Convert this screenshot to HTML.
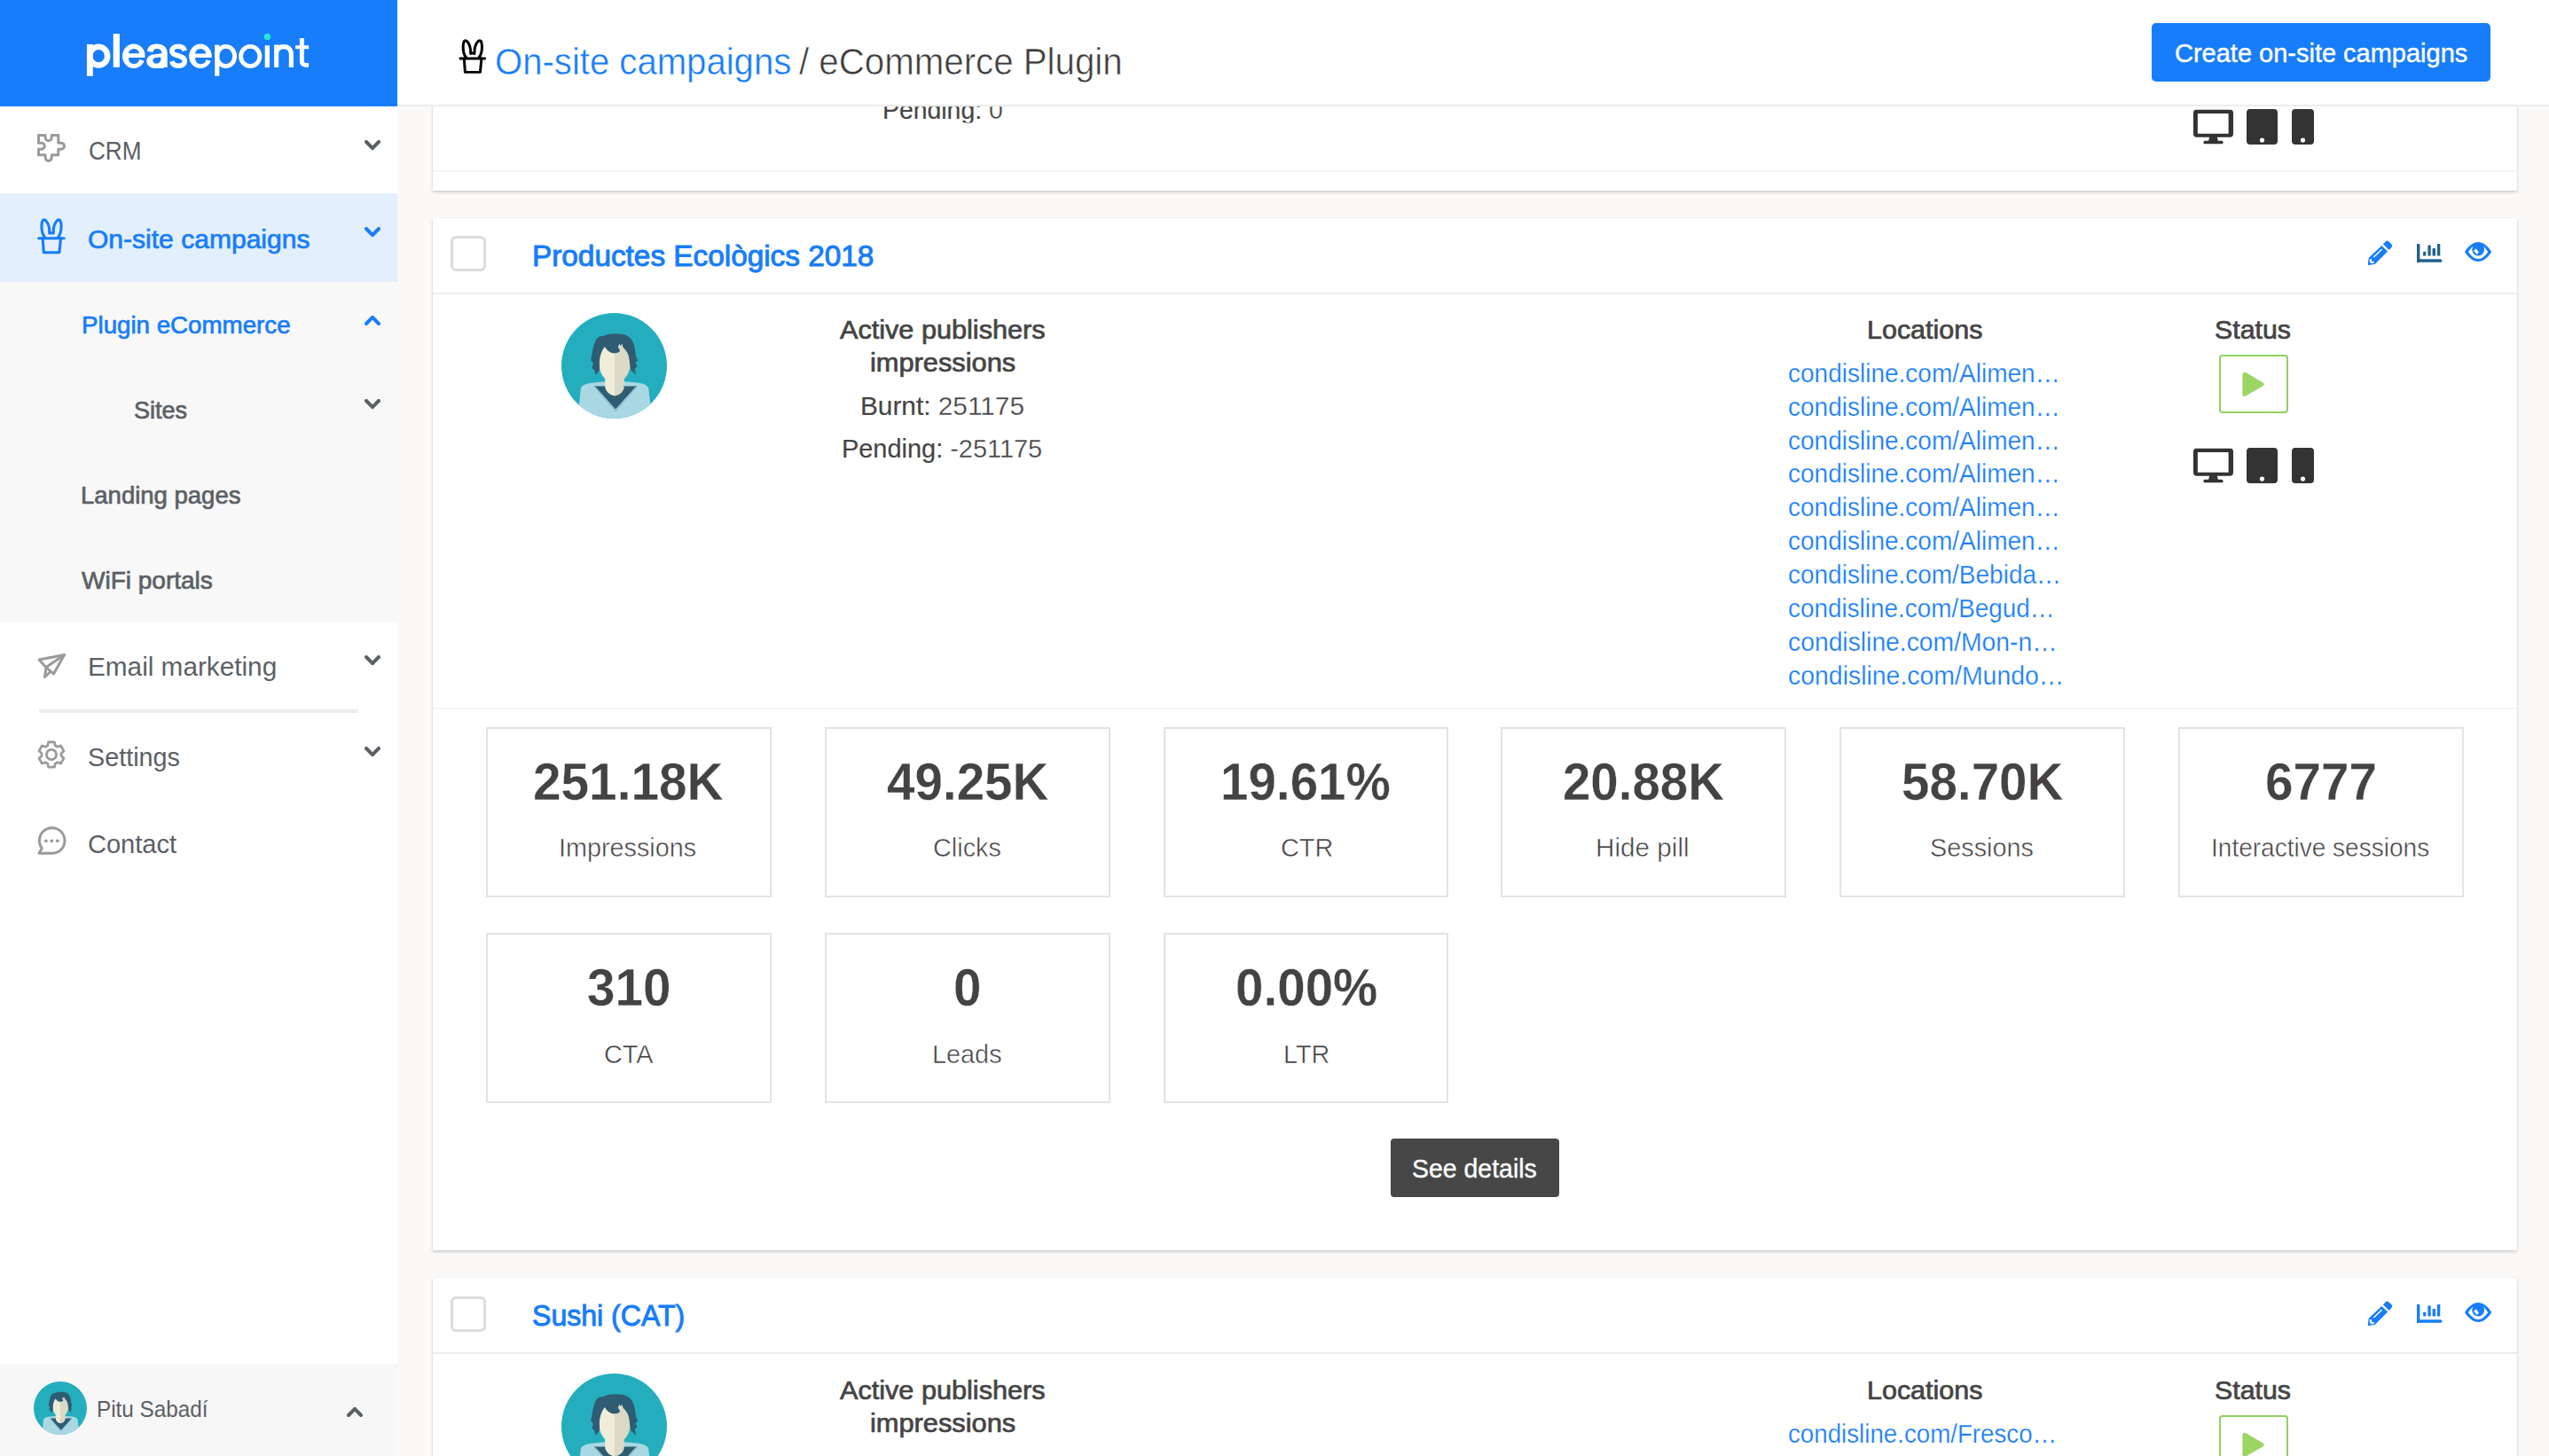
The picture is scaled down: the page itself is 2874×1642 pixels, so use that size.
<!DOCTYPE html>
<html><head><meta charset="utf-8">
<style>
*{box-sizing:border-box;margin:0;padding:0}
html,body{width:2874px;height:1642px;overflow:hidden;background:#faf9f7;font-family:"Liberation Sans",sans-serif;color:#444}
.a{position:absolute}
.t{position:absolute;line-height:1;white-space:nowrap;transform-origin:0 0}
#side{position:absolute;left:0;top:0;width:448px;height:1642px;background:#fff;z-index:5}
#hdr{position:absolute;left:448px;top:0;width:2426px;height:120px;background:#fff;border-bottom:2px solid #ececec;z-index:4}
.card{position:absolute;left:488px;width:2350px;background:#fff;box-shadow:0 2px 3px rgba(0,0,0,.16),0 0 2px rgba(0,0,0,.07)}
.sep{position:absolute;left:488px;width:2350px;height:2px;background:#ededed}
.box{position:absolute;width:322px;height:192px;border:2px solid #e3e3e3;background:#fff}
.chk{position:absolute;left:508px;width:40px;height:40px;border:3px solid #dcdcdc;border-radius:6px;background:#fff}
.play{position:absolute;left:2502px;width:78px;height:66px;border:2px solid #8fd160;border-radius:4px;background:#fff}
svg{position:absolute;overflow:visible}
#cnt{position:absolute;left:0;top:0;width:2874px;height:1642px;z-index:1}
#ov{position:absolute;left:0;top:0;width:2874px;height:1642px;z-index:6;pointer-events:none}
</style></head>
<body>
<svg width="0" height="0" style="position:absolute">
<defs>
<symbol id="avatar" viewBox="0 0 1456 1456">
  <clipPath id="avc"><circle cx="723" cy="721" r="639"/></clipPath>
  <circle cx="723" cy="721" r="639" fill="#24aebd"/>
  <g clip-path="url(#avc)">
    <path d="M290 1456 L300 1190 L318 1000 C326 958 380 935 470 925 L728 902 L1000 925 C1090 935 1132 960 1140 1000 L1162 1190 L1170 1456 Z" fill="#a9d8e4"/>
    <path d="M478 968 L1003 968 L740 1275 Z" fill="#2e5c73"/><path d="M478 968 L740 1275 L752 1262 L500 980 Z" fill="#9fd0de"/><path d="M1003 968 L740 1275 L728 1262 L980 980 Z" fill="#9fd0de"/>
    <path d="M612 840 L614 990 C640 1062 700 1085 736 1085 L736 840 Z" fill="#efecda"/>
    <path d="M728 840 L728 1085 C790 1080 830 1040 842 990 L845 840 Z" fill="#dcd9c6"/>
    <path d="M736 430 C610 430 540 540 540 700 C540 830 640 935 736 940 Z" fill="#efecda"/>
    <path d="M728 430 L728 940 C820 935 918 830 918 700 C918 540 850 430 728 430 Z" fill="#dcd9c6"/>
    <path d="M440 655 C462 560 468 470 505 405 C528 368 560 360 590 362 C640 330 740 322 830 340 C915 360 958 420 972 500 C980 560 982 610 1012 660 L982 676 L1002 735 L972 752 L988 830 L928 778 L912 700 C910 630 895 570 862 530 L832 498 L818 458 L795 480 L788 452 L770 492 L795 540 C770 568 720 578 682 560 C650 546 625 520 610 490 C575 530 548 600 545 680 L548 770 L502 832 L482 772 L455 745 L470 690 Z" fill="#2e5c73"/>
  </g>
</symbol>
<symbol id="cactus" viewBox="0 0 32 41">
  <g fill="none" stroke="currentColor" stroke-width="3.1" stroke-linecap="round" stroke-linejoin="round">
    <path d="M1.6 22.7 H30.2"/>
    <path d="M6.15 22.7 L7.3 38.7 H24.9 L26.5 22.7"/>
    <path d="M8.6 21.7 C5.6 18 4.8 12.5 5 8 C5.2 4 6.2 1.9 7.6 1.9 C9.6 1.9 12.8 5.5 13.6 12 L13.8 17.1 Q16 15.9 18.2 17.1 L18.4 12 C19.2 5.5 22.4 1.9 24.4 1.9 C25.8 1.9 26.8 4 27 8 C27.2 12.5 26.4 18 23.4 21.7"/>
  </g>
</symbol>
<symbol id="desk" viewBox="0 0 46 40">
  <path fill="#333" d="M4 0 H42 A4 4 0 0 1 46 4 V28 A4 4 0 0 1 42 32 H27.5 L28.5 36.2 H33 A2 2 0 0 1 33 40 H13 A2 2 0 0 1 13 36.2 H17.5 L18.5 32 H4 A4 4 0 0 1 0 28 V4 A4 4 0 0 1 4 0 Z M5 4.6 V28 H40.5 V4.6 Z" fill-rule="evenodd"/>
</symbol>
<symbol id="tab" viewBox="0 0 35 40">
  <path fill="#333" fill-rule="evenodd" d="M4 0 H31 A4 4 0 0 1 35 4 V36 A4 4 0 0 1 31 40 H4 A4 4 0 0 1 0 36 V4 A4 4 0 0 1 4 0 Z M17.5 32.5 A2.6 2.6 0 1 0 17.5 37.7 A2.6 2.6 0 1 0 17.5 32.5 Z"/>
</symbol>
<symbol id="phone" viewBox="0 0 25 40">
  <path fill="#333" fill-rule="evenodd" d="M4 0 H21 A4 4 0 0 1 25 4 V36 A4 4 0 0 1 21 40 H4 A4 4 0 0 1 0 36 V4 A4 4 0 0 1 4 0 Z M12.5 32.5 A2.6 2.6 0 1 0 12.5 37.7 A2.6 2.6 0 1 0 12.5 32.5 Z"/>
</symbol>
<symbol id="pencil" viewBox="0 0 1533 1456">
  <path fill="currentColor" d="M880 355 L1000 240 Q1050 195 1110 225 L1250 360 Q1300 420 1250 490 L1140 610 Z"/>
  <path fill="currentColor" fill-rule="evenodd" d="M820 420 L1075 670 L545 1205 Q520 1225 480 1230 L270 1268 Q215 1275 222 1215 L255 965 Q262 945 280 930 Z M300 1000 L385 1000 L390 1100 L490 1110 L490 1180 L350 1185 L300 1130 Z M450 900 L490 935 L850 595 L815 555 Z"/>
</symbol>
<symbol id="chart" viewBox="0 0 30 22">
  <g fill="currentColor">
    <rect x="0" y="0" width="3.4" height="21" rx="0.6"/>
    <rect x="0" y="17.2" width="28.4" height="3.6" rx="1.6"/>
    <rect x="7.1" y="8.7" width="3.2" height="4.9" rx="0.6"/>
    <rect x="12.4" y="1.6" width="3.3" height="12" rx="0.6"/>
    <rect x="17.6" y="5.1" width="3.4" height="8.5" rx="0.6"/>
    <rect x="23" y="0" width="3.3" height="13.6" rx="0.6"/>
  </g>
</symbol>
<symbol id="eye" viewBox="0 0 31 22">
  <path fill="currentColor" fill-rule="evenodd" d="M0 11 C5 3.5 10 0 15.2 0 C20.4 0 25.4 3.5 30.2 11 C25.4 18.5 20.4 22 15.2 22 C10 22 5 18.5 0 11 Z M4 11 C7.2 15.5 10.9 19 15.2 19 C19.5 19 23 15.5 26.2 11 C24.6 8.8 23 6.6 21.4 4.9 L8.8 4.9 C7.2 6.6 5.6 8.8 4 11 Z"/>
  <circle cx="15.2" cy="8.6" r="6.9" fill="currentColor"/>
  <path fill="#fff" d="M10.1 9.7 L12.8 7.3 L15.9 11.5 L13.7 13.9 Z"/>
</symbol>
<symbol id="chev" viewBox="0 0 18 12">
  <path d="M2 2 L9 9.2 L16 2" fill="none" stroke="currentColor" stroke-width="4" stroke-linecap="round" stroke-linejoin="round"/>
</symbol>
</defs>
</svg>

<div id="cnt">
  <!-- card 1 (partial) -->
  <div class="card" style="top:-900px;height:1114.5px"></div>
  <div class="sep" style="top:192px;height:1.5px;background:#f6f6f6"></div>
  <svg style="left:2473px;top:123px" width="45" height="40" viewBox="0 0 46 40"><use href="#desk"/></svg>
  <svg style="left:2533px;top:123px" width="35" height="40" viewBox="0 0 35 40"><use href="#tab"/></svg>
  <svg style="left:2583.5px;top:123px" width="25" height="40" viewBox="0 0 25 40"><use href="#phone"/></svg>

  <!-- card 2 -->
  <div class="card" style="top:246px;height:1164px"></div>
  <div class="chk" style="top:266px"></div>
  <div class="sep" style="top:330px"></div>
  <svg style="left:2664px;top:266px;color:#177dfa" width="40" height="38" viewBox="0 0 1533 1456"><use href="#pencil"/></svg>
  <svg style="left:2724.7px;top:275px;color:#22618c" width="30" height="22" viewBox="0 0 30 22"><use href="#chart"/></svg>
  <svg style="left:2778.8px;top:273px;color:#177dfa" width="31" height="22" viewBox="0 0 31 22"><use href="#eye"/></svg>
  <svg style="left:632.5px;top:352.5px" width="119" height="119" viewBox="85 82 1277 1278"><use href="#avatar" width="1456" height="1456"/></svg>
  <div class="play" style="top:400px"></div>
  <svg style="left:2527.8px;top:419px" width="26" height="29" viewBox="0 0 26 29"><path d="M4.2 1.2 L23.6 12.4 Q25.6 14.2 23.6 16.2 L4.2 27.6 Q0.6 29.2 0.4 25.4 V3.6 Q0.6 -0.2 4.2 1.2 Z" fill="#9bd663"/></svg>
  <svg style="left:2473px;top:505px" width="45" height="40" viewBox="0 0 46 40"><use href="#desk"/></svg>
  <svg style="left:2533px;top:505px" width="35" height="40" viewBox="0 0 35 40"><use href="#tab"/></svg>
  <svg style="left:2583.5px;top:505px" width="25" height="40" viewBox="0 0 25 40"><use href="#phone"/></svg>
  <div class="sep" style="top:798px;height:1.5px;background:#f4f4f4"></div>
  <div class="box" style="left:548px;top:820px;width:321.5px"></div>
  <div class="box" style="left:930px;top:820px;width:322px"></div>
  <div class="box" style="left:1312px;top:820px;width:320.5px"></div>
  <div class="box" style="left:1692px;top:820px;width:321.5px"></div>
  <div class="box" style="left:2074.3px;top:820px;width:321.5px"></div>
  <div class="box" style="left:2456.3px;top:820px;width:321.5px"></div>
  <div class="box" style="left:548px;top:1052px;width:321.5px"></div>
  <div class="box" style="left:930px;top:1052px;width:322px"></div>
  <div class="box" style="left:1312px;top:1052px;width:320.5px"></div>
  <div class="a" style="left:1568px;top:1284px;width:190px;height:66px;background:#474747;border-radius:4px"></div>

  <!-- card 3 -->
  <div class="card" style="top:1441px;height:600px"></div>
  <div class="chk" style="top:1462px"></div>
  <div class="sep" style="top:1525px"></div>
  <svg style="left:2664px;top:1462px;color:#177dfa" width="40" height="38" viewBox="0 0 1533 1456"><use href="#pencil"/></svg>
  <svg style="left:2724.7px;top:1471px;color:#177dfa" width="30" height="22" viewBox="0 0 30 22"><use href="#chart"/></svg>
  <svg style="left:2778.8px;top:1469px;color:#177dfa" width="31" height="22" viewBox="0 0 31 22"><use href="#eye"/></svg>
  <svg style="left:632.5px;top:1548.5px" width="119" height="119" viewBox="85 82 1277 1278"><use href="#avatar" width="1456" height="1456"/></svg>
  <div class="play" style="top:1595.5px"></div>
  <svg style="left:2527.8px;top:1614.5px" width="26" height="29" viewBox="0 0 26 29"><path d="M4.2 1.2 L23.6 12.4 Q25.6 14.2 23.6 16.2 L4.2 27.6 Q0.6 29.2 0.4 25.4 V3.6 Q0.6 -0.2 4.2 1.2 Z" fill="#9bd663"/></svg>
</div>

<!-- HEADER -->
<div id="hdr"></div>
<!-- SIDEBAR -->
<div id="side">
  <div class="a" style="left:0;top:0;width:448px;height:120px;background:#177dfa"></div>
  <div class="a" style="left:0;top:218px;width:448px;height:100px;background:#e3effd"></div>
  <div class="a" style="left:0;top:318px;width:448px;height:384px;background:#f8f8f8"></div>
  <div class="a" style="left:44px;top:800px;width:360px;height:4px;background:#ededed"></div>
  <div class="a" style="left:0;top:1538px;width:448px;height:104px;background:#f7f7f7"></div>
</div>

<div id="ov">
  <!-- logo -->
  <svg style="left:0;top:0" width="448" height="120" viewBox="0 0 448 120">
  <g fill="none" stroke="#fff" stroke-linecap="butt">
    <path d="M101.35 49.9 V85.8" stroke-width="6.9"/>
    <ellipse cx="111.2" cy="63.15" rx="9.95" ry="10.45" stroke-width="6.6"/>
    <path d="M131.3 38.1 V75.9" stroke-width="7.2"/>
  </g>
  <g transform="translate(0 0)"><ellipse cx="150.8" cy="63.25" rx="12.8" ry="13.75" fill="#fff"/><path d="M145 60.3 A5.95 5.4 0 0 1 156.9 60.3 Z" fill="#177dfa"/><path d="M145 64.9 H164.5 V69.2 L157.3 67.1 A6.15 6.1 0 0 1 145 64.9 Z" fill="#177dfa"/></g>
  <path d="M165.8 57.8 C166.8 52 171 49.6 176.8 49.6 C184 49.6 188.7 53.5 188.7 60 V76 H182.5 V60.5 C182.5 57 180.5 55 176.8 55 C174.3 55 172.8 56.5 172.4 59.1 Z" fill="#fff"/>
  <path d="M184.5 60.1 L173.85 61.2 A8.65 7.85 0 0 0 173.85 76.9 H184.5 Z" fill="#fff"/>
  <path d="M181.3 64.6 L176 65 C173.4 65.2 172.3 66.5 172.3 68.3 C172.3 70.3 174 71.7 176.3 71.7 C179.6 71.7 181.3 69.6 181.3 67 Z" fill="#177dfa"/>
  <path d="M208.3 57.2 C207.4 53.6 204.8 52.3 201 52.3 C197.2 52.3 194 54.2 194 57.5 C194 60.9 197.2 61.9 201.5 63 C206 64.2 208.3 65.5 208.3 69 C208.3 72.3 205.2 74.2 201 74.2 C197 74.2 194.6 72.5 193.8 69.1" fill="none" stroke="#fff" stroke-width="5.6"/>
  <g transform="translate(75.15 0.1)"><ellipse cx="150.8" cy="63.25" rx="12.8" ry="13.75" fill="#fff"/><path d="M145 60.3 A5.95 5.4 0 0 1 156.9 60.3 Z" fill="#177dfa"/><path d="M145 64.9 H164.5 V69.2 L157.3 67.1 A6.15 6.1 0 0 1 145 64.9 Z" fill="#177dfa"/></g>
  <g fill="none" stroke="#fff" stroke-linecap="butt">
    <path d="M244.75 50.6 V85.7" stroke-width="5.1"/>
    <ellipse cx="254.7" cy="63.5" rx="9.95" ry="11.1" stroke-width="4.9"/>
    <ellipse cx="282.2" cy="63.5" rx="10.65" ry="11.1" stroke-width="4.9"/>
    <path d="M301.35 51.2 V76.1" stroke-width="5.3"/>
    <path d="M311.65 50.6 V76.1 M311.65 61 C311.65 55 315 52.6 320 52.6 C325 52.6 328.35 55.5 328.35 61.5 V76.1" stroke-width="5.1"/>
    <path d="M340.35 43 V68.5 C340.35 72.6 342.2 73.6 348.1 73.6" stroke-width="4.9"/>
    <path d="M333.1 53.2 H348.1" stroke-width="4"/>
  </g><circle cx="301.4" cy="41.4" r="3.7" fill="#25e8d6"/></svg>
  <!-- sidebar icons -->
  <svg style="left:40px;top:149px" width="36" height="36" viewBox="40 149 36 36"><path d="M43.5 152.5 H51.2 V155.3 A3.5 3.5 0 0 0 58.2 155.3 V152.5 H65.8 V161.2 H69 A3.5 3.5 0 0 1 69 168.2 H65.8 V174.7 H58.2 V177.9 A3.5 3.5 0 0 1 51.2 177.9 V174.7 H43.5 V168.2 H46.8 A3.5 3.5 0 0 0 46.8 161.2 H43.5 Z" fill="none" stroke="#9a9a9a" stroke-width="3" stroke-linejoin="round"/></svg>
  <svg style="left:42px;top:245.5px;color:#177dfa" width="32" height="41" viewBox="0 0 32 41"><use href="#cactus"/></svg>
  <svg style="left:40px;top:735px" width="36" height="32" viewBox="40 735 36 32"><g fill="none" stroke="#9a9a9a" stroke-width="3" stroke-linejoin="round" stroke-linecap="round"><path d="M44 744 L72.5 738.5 L60.5 760 L52 752.5 Z"/><path d="M52 752.5 L72.5 738.5"/><path d="M52 752.5 L50.5 763.5 L57 757.5"/></g></svg>
  <svg style="left:40px;top:833px" width="36" height="36" viewBox="-18 -18 36 36"><g transform="translate(0 0)" fill="none" stroke="#9a9a9a" stroke-width="2.7" stroke-linejoin="round"><path d="M-4.30 -10.13 L-3.41 -14.20 L3.41 -14.20 L4.30 -10.13 L6.62 -8.78 L10.59 -10.05 L14.00 -4.15 L10.92 -1.34 L10.92 1.34 L14.00 4.15 L10.59 10.05 L6.62 8.78 L4.30 10.13 L3.41 14.20 L-3.41 14.20 L-4.30 10.13 L-6.62 8.78 L-10.59 10.05 L-14.00 4.15 L-10.92 1.34 L-10.92 -1.34 L-14.00 -4.15 L-10.59 -10.05 L-6.62 -8.78 Z"/><circle cx="0" cy="0" r="5.6"/></g></svg>
  <svg style="left:40px;top:931px" width="36" height="36" viewBox="40 931 36 36"><g fill="none" stroke="#9a9a9a" stroke-width="3" stroke-linejoin="round"><path d="M58.5 962.3 H44 L47.2 956.5 A14.3 14.3 0 1 1 58.5 962.3 Z"/></g><g fill="#9a9a9a"><circle cx="51.8" cy="948.3" r="1.9"/><circle cx="58.3" cy="948.3" r="1.9"/><circle cx="64.8" cy="948.3" r="1.9"/></g></svg>
  <!-- chevrons -->
  <svg style="left:410.5px;top:157.5px;color:#5b6066" width="18" height="12" viewBox="0 0 18 12"><use href="#chev"/></svg>
  <svg style="left:410.5px;top:255.5px;color:#177dfa" width="18" height="12" viewBox="0 0 18 12"><use href="#chev"/></svg>
  <svg style="left:411px;top:354.5px;color:#177dfa;transform:scaleY(-1)" width="18" height="12" viewBox="0 0 18 12"><use href="#chev"/></svg>
  <svg style="left:411px;top:450px;color:#5b6066" width="18" height="12" viewBox="0 0 18 12"><use href="#chev"/></svg>
  <svg style="left:410.5px;top:739px;color:#5b6066" width="18" height="12" viewBox="0 0 18 12"><use href="#chev"/></svg>
  <svg style="left:410.5px;top:842px;color:#5b6066" width="18" height="12" viewBox="0 0 18 12"><use href="#chev"/></svg>
  <svg style="left:390.5px;top:1585.5px;color:#5b6066;transform:scaleY(-1)" width="18" height="12" viewBox="0 0 18 12"><use href="#chev"/></svg>
  <!-- user avatar -->
  <svg style="left:38px;top:1558px" width="60" height="60" viewBox="85 82 1277 1278"><use href="#avatar" width="1456" height="1456"/></svg>
  <!-- header icon + button -->
  <svg style="left:517.2px;top:43.8px;color:#000" width="31.6" height="39.6" viewBox="0 0 32 41"><use href="#cactus"/></svg>
  <div class="a" style="left:2426px;top:26px;width:382px;height:66px;background:#177dfa;border-radius:5px"></div>
<div class="t" style="left:99.7px;top:154.7px;font-size:29.6px;font-weight:400;color:#5b6066;transform:scaleX(0.8828);">CRM</div>
<div class="t" style="left:99.0px;top:255.1px;font-size:29.6px;font-weight:400;color:#177dfa;transform:scaleX(1.0151);-webkit-text-stroke:0.7px currentColor;">On-site campaigns</div>
<div class="t" style="left:91.6px;top:352.6px;font-size:27.8px;font-weight:400;color:#177dfa;transform:scaleX(0.9966);-webkit-text-stroke:0.7px currentColor;">Plugin eCommerce</div>
<div class="t" style="left:151.3px;top:448.7px;font-size:27.8px;font-weight:400;color:#5b6066;transform:scaleX(0.9717);-webkit-text-stroke:0.7px currentColor;">Sites</div>
<div class="t" style="left:90.9px;top:544.7px;font-size:27.8px;font-weight:400;color:#5b6066;transform:scaleX(0.9894);-webkit-text-stroke:0.7px currentColor;">Landing pages</div>
<div class="t" style="left:92.3px;top:640.5px;font-size:27.8px;font-weight:400;color:#5b6066;transform:scaleX(1.0075);-webkit-text-stroke:0.7px currentColor;">WiFi portals</div>
<div class="t" style="left:99.0px;top:736.7px;font-size:29.6px;font-weight:400;color:#5b6066;transform:scaleX(1.0048);">Email marketing</div>
<div class="t" style="left:99.3px;top:839.1px;font-size:29.6px;font-weight:400;color:#5b6066;transform:scaleX(0.9714);">Settings</div>
<div class="t" style="left:99.3px;top:936.5px;font-size:29.6px;font-weight:400;color:#5b6066;transform:scaleX(0.9812);">Contact</div>
<div class="t" style="left:108.5px;top:1576.0px;font-size:26.2px;font-weight:400;color:#5b6066;transform:scaleX(0.9271);">Pitu Sabad&iacute;</div>
<div class="t" style="left:558.1px;top:47.7px;font-size:42.6px;font-weight:400;color:#177dfa;transform:scaleX(0.9413);-webkit-text-stroke:0.45px #fff;">On-site campaigns</div>
<div class="t" style="left:901.1px;top:47.7px;font-size:42.6px;font-weight:400;color:#3e3c3d;transform:scaleX(0.9450);-webkit-text-stroke:0.6px #fff;">/ eCommerce Plugin</div>
<div class="t" style="left:2451.7px;top:44.6px;font-size:29.8px;font-weight:400;color:#fff;transform:scaleX(0.9728);-webkit-text-stroke:0.45px currentColor;">Create on-site campaigns</div>
<div class="t" style="left:994.7px;top:108.8px;font-size:29.6px;font-weight:400;color:#444;transform:scaleX(0.9594);clip-path:inset(11.5px 0 0 0);"><span style="-webkit-text-stroke:0.15px currentColor">Pending:</span><span style="-webkit-text-stroke:0.3px #fff"> 0</span></div>
<div class="t" style="left:600.4px;top:271.9px;font-size:33.6px;font-weight:400;color:#177dfa;transform:scaleX(0.9925);-webkit-text-stroke:1.0px currentColor;">Productes Ecol&ograve;gics 2018</div>
<div class="t" style="left:946.7px;top:357.6px;font-size:28.8px;font-weight:400;color:#444;transform:scaleX(1.0636);-webkit-text-stroke:0.7px currentColor;">Active publishers</div>
<div class="t" style="left:980.5px;top:394.7px;font-size:28.8px;font-weight:400;color:#444;transform:scaleX(1.0684);-webkit-text-stroke:0.7px currentColor;">impressions</div>
<div class="t" style="left:969.8px;top:442.9px;font-size:29.6px;font-weight:400;color:#444;transform:scaleX(1.0067);"><span style="-webkit-text-stroke:0.15px currentColor">Burnt:</span><span style="-webkit-text-stroke:0.3px #fff"> 251175</span></div>
<div class="t" style="left:949.0px;top:491.0px;font-size:29.6px;font-weight:400;color:#444;transform:scaleX(0.9772);"><span style="-webkit-text-stroke:0.15px currentColor">Pending:</span><span style="-webkit-text-stroke:0.3px #fff"> -251175</span></div>
<div class="t" style="left:2105.2px;top:358.2px;font-size:28.8px;font-weight:400;color:#444;transform:scaleX(1.0579);-webkit-text-stroke:0.7px currentColor;">Locations</div>
<div class="t" style="left:2497.3px;top:358.2px;font-size:28.8px;font-weight:400;color:#444;transform:scaleX(1.0525);-webkit-text-stroke:0.7px currentColor;">Status</div>
<div class="t" style="left:2015.8px;top:406.8px;font-size:28.6px;font-weight:400;color:#177dfa;transform:scaleX(0.9795);-webkit-text-stroke:0.25px #fff;">condisline.com/Alimen&hellip;</div>
<div class="t" style="left:2015.8px;top:444.7px;font-size:28.6px;font-weight:400;color:#177dfa;transform:scaleX(0.9795);-webkit-text-stroke:0.25px #fff;">condisline.com/Alimen&hellip;</div>
<div class="t" style="left:2015.8px;top:482.5px;font-size:28.6px;font-weight:400;color:#177dfa;transform:scaleX(0.9795);-webkit-text-stroke:0.25px #fff;">condisline.com/Alimen&hellip;</div>
<div class="t" style="left:2015.8px;top:520.4px;font-size:28.6px;font-weight:400;color:#177dfa;transform:scaleX(0.9795);-webkit-text-stroke:0.25px #fff;">condisline.com/Alimen&hellip;</div>
<div class="t" style="left:2015.8px;top:558.3px;font-size:28.6px;font-weight:400;color:#177dfa;transform:scaleX(0.9795);-webkit-text-stroke:0.25px #fff;">condisline.com/Alimen&hellip;</div>
<div class="t" style="left:2015.8px;top:596.1px;font-size:28.6px;font-weight:400;color:#177dfa;transform:scaleX(0.9795);-webkit-text-stroke:0.25px #fff;">condisline.com/Alimen&hellip;</div>
<div class="t" style="left:2015.8px;top:634.0px;font-size:28.6px;font-weight:400;color:#177dfa;transform:scaleX(0.9787);-webkit-text-stroke:0.25px #fff;">condisline.com/Bebida&hellip;</div>
<div class="t" style="left:2015.8px;top:671.9px;font-size:28.6px;font-weight:400;color:#177dfa;transform:scaleX(0.9750);-webkit-text-stroke:0.25px #fff;">condisline.com/Begud&hellip;</div>
<div class="t" style="left:2015.8px;top:709.8px;font-size:28.6px;font-weight:400;color:#177dfa;transform:scaleX(0.9897);-webkit-text-stroke:0.25px #fff;">condisline.com/Mon-n&hellip;</div>
<div class="t" style="left:2015.8px;top:747.6px;font-size:28.6px;font-weight:400;color:#177dfa;transform:scaleX(0.9942);-webkit-text-stroke:0.25px #fff;">condisline.com/Mundo&hellip;</div>
<div class="t" style="left:601.3px;top:851.8px;font-size:60.0px;font-weight:700;color:#454243;transform:scaleX(0.9455);-webkit-text-stroke:0.35px #fff;">251.18K</div>
<div class="t" style="left:630.4px;top:941.0px;font-size:30.0px;font-weight:400;color:#454243;transform:scaleX(0.9595);-webkit-text-stroke:0.5px #fff;">Impressions</div>
<div class="t" style="left:1000.4px;top:851.8px;font-size:60.0px;font-weight:700;color:#454243;transform:scaleX(0.9428);-webkit-text-stroke:0.35px #fff;">49.25K</div>
<div class="t" style="left:1052.4px;top:941.0px;font-size:30.0px;font-weight:400;color:#454243;transform:scaleX(0.9610);-webkit-text-stroke:0.5px #fff;">Clicks</div>
<div class="t" style="left:1376.0px;top:851.8px;font-size:60.0px;font-weight:700;color:#454243;transform:scaleX(0.9428);-webkit-text-stroke:0.35px #fff;">19.61%</div>
<div class="t" style="left:1443.8px;top:941.0px;font-size:30.0px;font-weight:400;color:#454243;transform:scaleX(0.9610);-webkit-text-stroke:0.5px #fff;">CTR</div>
<div class="t" style="left:1761.6px;top:851.8px;font-size:60.0px;font-weight:700;color:#454243;transform:scaleX(0.9400);-webkit-text-stroke:0.35px #fff;">20.88K</div>
<div class="t" style="left:1799.3px;top:941.0px;font-size:30.0px;font-weight:400;color:#454243;transform:scaleX(0.9892);-webkit-text-stroke:0.5px #fff;">Hide pill</div>
<div class="t" style="left:2143.6px;top:851.8px;font-size:60.0px;font-weight:700;color:#454243;transform:scaleX(0.9428);-webkit-text-stroke:0.35px #fff;">58.70K</div>
<div class="t" style="left:2175.9px;top:941.0px;font-size:30.0px;font-weight:400;color:#454243;transform:scaleX(0.9610);-webkit-text-stroke:0.5px #fff;">Sessions</div>
<div class="t" style="left:2554.4px;top:851.8px;font-size:60.0px;font-weight:700;color:#454243;transform:scaleX(0.9428);-webkit-text-stroke:0.35px #fff;">6777</div>
<div class="t" style="left:2493.2px;top:941.0px;font-size:30.0px;font-weight:400;color:#454243;transform:scaleX(0.9344);-webkit-text-stroke:0.5px #fff;">Interactive sessions</div>
<div class="t" style="left:662.4px;top:1084.4px;font-size:60.0px;font-weight:700;color:#454243;transform:scaleX(0.9428);-webkit-text-stroke:0.35px #fff;">310</div>
<div class="t" style="left:680.7px;top:1173.6px;font-size:30.0px;font-weight:400;color:#454243;transform:scaleX(0.9610);-webkit-text-stroke:0.5px #fff;">CTA</div>
<div class="t" style="left:1075.3px;top:1084.4px;font-size:60.0px;font-weight:700;color:#454243;transform:scaleX(0.9428);-webkit-text-stroke:0.35px #fff;">0</div>
<div class="t" style="left:1051.0px;top:1173.6px;font-size:30.0px;font-weight:400;color:#454243;transform:scaleX(0.9610);-webkit-text-stroke:0.5px #fff;">Leads</div>
<div class="t" style="left:1392.5px;top:1084.4px;font-size:60.0px;font-weight:700;color:#454243;transform:scaleX(0.9428);-webkit-text-stroke:0.35px #fff;">0.00%</div>
<div class="t" style="left:1446.7px;top:1173.6px;font-size:30.0px;font-weight:400;color:#454243;transform:scaleX(0.9610);-webkit-text-stroke:0.5px #fff;">LTR</div>
<div class="t" style="left:1592.0px;top:1302.9px;font-size:29.6px;font-weight:400;color:#fff;transform:scaleX(0.9614);-webkit-text-stroke:0.4px currentColor;">See details</div>
<div class="t" style="left:599.9px;top:1467.1px;font-size:33.6px;font-weight:400;color:#177dfa;transform:scaleX(0.9545);-webkit-text-stroke:1.0px currentColor;">Sushi (CAT)</div>
<div class="t" style="left:946.7px;top:1554.3px;font-size:28.8px;font-weight:400;color:#444;transform:scaleX(1.0636);-webkit-text-stroke:0.7px currentColor;">Active publishers</div>
<div class="t" style="left:980.5px;top:1591.4px;font-size:28.8px;font-weight:400;color:#444;transform:scaleX(1.0684);-webkit-text-stroke:0.7px currentColor;">impressions</div>
<div class="t" style="left:2105.2px;top:1554.0px;font-size:28.8px;font-weight:400;color:#444;transform:scaleX(1.0579);-webkit-text-stroke:0.7px currentColor;">Locations</div>
<div class="t" style="left:2497.3px;top:1554.0px;font-size:28.8px;font-weight:400;color:#444;transform:scaleX(1.0525);-webkit-text-stroke:0.7px currentColor;">Status</div>
<div class="t" style="left:2016.3px;top:1602.8px;font-size:28.6px;font-weight:400;color:#177dfa;transform:scaleX(0.9688);-webkit-text-stroke:0.25px #fff;">condisline.com/Fresco&hellip;</div>
</div>
</body></html>
